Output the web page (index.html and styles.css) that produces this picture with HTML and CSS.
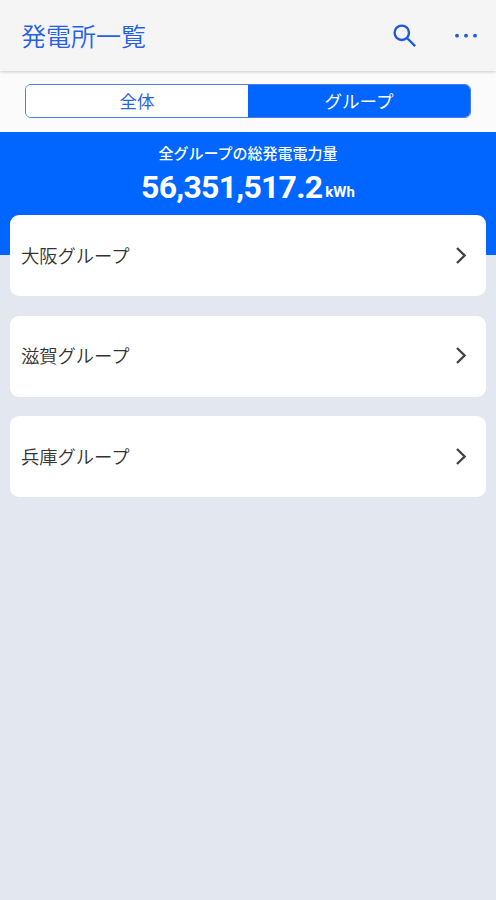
FILE: index.html
```html
<!DOCTYPE html>
<html lang="ja">
  <head>
    <meta charset="utf-8">
    <title>発電所一覧</title>
    <link rel="stylesheet" href="styles.css">
  </head>
  <body>
    <header class="header">
      <h1 class="title">発電所一覧</h1>
      <button class="icon-button" aria-label="検索">
        <svg width="24" height="24" viewBox="0 0 24 24">
          <circle cx="8.8" cy="8.8" r="7.2" />
          <path d="M14 14L22.2 22.2" />
        </svg>
      </button>
      <button class="icon-button menu-button" aria-label="メニュー">
        <svg class="dots" width="24" height="6" viewBox="0 0 24 6">
          <circle cx="3" cy="2.7" r="1.9" />
          <circle cx="12" cy="2.7" r="1.9" />
          <circle cx="21" cy="2.7" r="1.9" />
        </svg>
      </button>
    </header>
    <nav class="tab-bar">
      <div class="tabs">
        <button class="tab">全体</button>
        <button class="tab active">グループ</button>
      </div>
    </nav>
    <section class="summary">
      <div class="summary-label">全グループの総発電電力量</div>
      <div class="summary-value"><span class="number">56,351,517.2</span><span class="unit">kWh</span></div>
    </section>
    <main class="group-list">
      <a class="group-card">
        <span>大阪グループ</span>
        <svg class="chevron" width="12" height="18" viewBox="0 0 12 18"><path d="M2 1L9.6 8.5L2 16" /></svg>
      </a>
      <a class="group-card">
        <span>滋賀グループ</span>
        <svg class="chevron" width="12" height="18" viewBox="0 0 12 18"><path d="M2 1L9.6 8.5L2 16" /></svg>
      </a>
      <a class="group-card">
        <span>兵庫グループ</span>
        <svg class="chevron" width="12" height="18" viewBox="0 0 12 18"><path d="M2 1L9.6 8.5L2 16" /></svg>
      </a>
    </main>
  </body>
</html>
```
FILE: styles.css
```css
* {
  box-sizing: border-box;
}

body {
  margin: 0;
  min-height: 100vh;
  background-color: #e3e7ef;
  color: #333;
  font-family: Roboto, "Noto Sans CJK JP", sans-serif;
}

button {
  padding: 0;
  border: 0;
  background: none;
  font-family: inherit;
}

svg {
  display: block;
  fill: none;
}

.header {
  position: relative;
  display: flex;
  align-items: center;
  height: 71px;
  padding: 0 18px 0 21px;
  background-color: #f5f5f5;
  box-shadow: 0 1px 3px rgba(0, 0, 0, 0.2);
}

.title {
  flex: 1;
  margin: 0;
  padding-top: 4px;
  color: #2560e8;
  font-size: 25px;
  font-weight: 350;
  line-height: 36px;
}

.icon-button svg {
  stroke: #1f5ae0;
  stroke-width: 2.4;
}

.icon-button:not(.menu-button) svg {
  margin-right: 1px;
}

.menu-button {
  margin-left: 36px;
}

.icon-button .dots {
  fill: #1f5ae0;
  stroke: none;
}

.tab-bar {
  height: 61px;
  padding: 13px 25px 0;
  background-color: #fbfbfb;
}

.tabs {
  display: flex;
  height: 34px;
  border: 1px solid #4a7cec;
  border-radius: 6px;
  overflow: hidden;
}

.tab {
  flex: 1;
  padding-top: 3px;
  background-color: #fff;
  color: #2a63e0;
  font-size: 17.5px;
  line-height: 29px;
}

.tab.active {
  background-color: #0066ff;
  color: #fff;
}

.summary {
  height: 123px;
  padding-top: 11px;
  background-color: #0066ff;
  color: #fff;
  text-align: center;
}

.summary-label {
  font-size: 15px;
  font-weight: 500;
  line-height: 22px;
}

.summary-value {
  margin-top: 3px;
  font-weight: 700;
  line-height: 38px;
}

.number {
  font-size: 32px;
  letter-spacing: -0.75px;
}

.unit {
  margin-left: 3px;
  font-size: 15px;
  vertical-align: 1px;
}

/* the first card overlaps the blue summary */
.group-list {
  display: flex;
  flex-direction: column;
  gap: 19.5px;
  margin-top: -40px;
  padding: 0 10px;
}

.group-card {
  display: flex;
  align-items: center;
  justify-content: space-between;
  height: 81px;
  padding: 0 19px 2px 11px;
  border-radius: 9px;
  background-color: #fff;
  font-size: 18.3px;
  font-weight: 350;
}

.chevron {
  margin-top: 2px;
  stroke: #444;
  stroke-width: 2.4;
}
```
